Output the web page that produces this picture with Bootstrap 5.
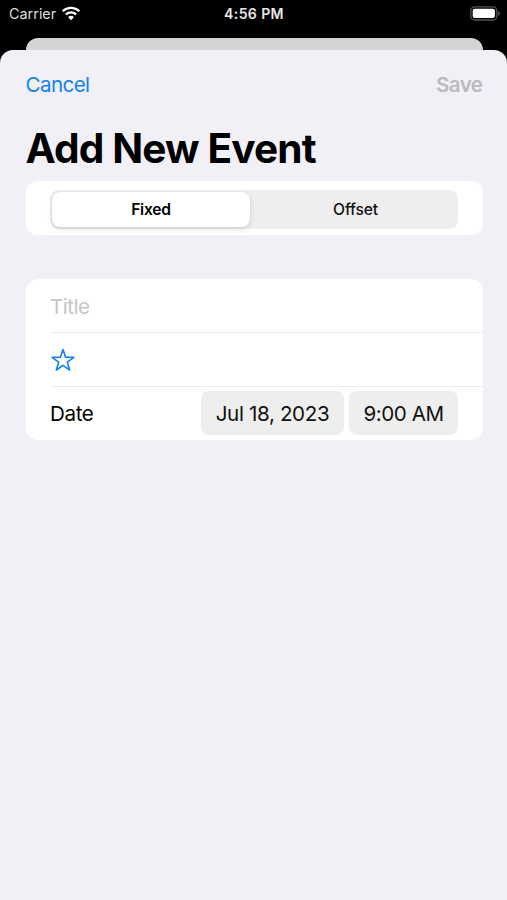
<!DOCTYPE html>
<html lang="en">
<head>
<meta charset="utf-8">
<meta name="viewport" content="width=device-width, initial-scale=1">
<title>Add New Event</title>
<link href="https://cdn.jsdelivr.net/npm/bootstrap@5.3.0/dist/css/bootstrap.min.css" rel="stylesheet">
<style>
  body { font-family: Inter, "Liberation Sans", sans-serif; font-size: 20.6px; line-height: 26px; color: #000; }
  .screen { height: 900px; }
  .status-bar { display: grid; grid-template-columns: 1fr auto 1fr; height: 38px; padding: 0 8px 10px 9px; font-size: 14.4px; line-height: 18px; color: #ddd; }
  .wifi { margin-left: 5px; margin-top: -2px; }
  .clock { font-size: 14.1px; color: #e8e8e8; letter-spacing: .36px; }
  .battery { margin-top: -2px; margin-right: -2px; }
  .sheet-behind { height: 12px; margin: 0 24.5px 0 25.5px; background: #d4d4d6; border-radius: 12px 12px 0 0; }
  .sheet { background: #f1f0f6; border-radius: 13px 13px 0 0; padding: 0 24.5px 0 25.5px; }
  .sheet-nav { height: 69px; }
  .sheet-nav .btn { font-size: 20.6px; line-height: 26px; }
  .cancel { color: #1680f5; letter-spacing: -.6px; }
  .save, .save:disabled { color: #bababf; font-weight: 600; letter-spacing: -.55px; opacity: 1; }
  .page-title { font-size: 40.6px; line-height: 50px; height: 62px; padding-top: 5px; letter-spacing: -.85px; }
  .panel { background: #fff; border-radius: 12px; }
  .mode-panel { height: 54px; padding: 9px 24.5px 6px 24.5px; margin-bottom: 44px; }
  .segments { background: #eee; border-radius: 9px; padding: 2px; height: 39px; }
  .segments .btn { font-size: 15.6px; line-height: 20px; letter-spacing: -.15px; border-radius: 8px; color: #111; font-weight: 500; }
  .segments .picked { flex: 0 0 198px; background: #fff; color: #000; font-weight: 600; letter-spacing: -.2px; box-shadow: 0 2px 5px rgba(0,0,0,.13), 0 0 1px rgba(0,0,0,.1); }
  .segments .other { padding-left: 5px !important; }
  .fields { height: 161px; padding-left: 24.5px; }
  .field { height: 54px; }
  .field:first-child { height: 53px; }
  .field + .field { border-top: 1.4px solid #ececed; }
  .field .form-control { font-size: 20.6px; line-height: 26px; letter-spacing: -.5px; padding-top: 2px !important; }
  .field .form-control::placeholder { color: #c5c5c7; opacity: 1; }
  .date-row { padding: 0 24.5px 1px 0; gap: 5px; letter-spacing: -.4px; }
  .date-label { padding-top: 2px; }
  .pill { background: #eee; border-radius: 8px; height: 44px; font-size: 20.6px; line-height: 26px; color: #111; padding-top: 2px !important; }
  .pill-date { width: 143px; letter-spacing: -.36px; }
  .pill-time { width: 109px; letter-spacing: -.45px; }
</style>
</head>
<body>
<div class="screen d-flex flex-column bg-black overflow-hidden">
  <header class="status-bar align-items-center">
    <div class="d-flex align-items-center">
      <span class="carrier">Carrier</span>
      <svg class="wifi" width="20" height="15" viewBox="0 0 20 15" fill="none" stroke="#fff" stroke-width="2.3" aria-label="Wi-Fi">
        <path d="M1.7 5.3a11.8 11.8 0 0 1 16.6 0"/>
        <path d="M4.9 8.5a7.3 7.3 0 0 1 10.2 0"/>
        <path d="M10 14.2 7.1 11.3a4.1 4.1 0 0 1 5.8 0z" fill="#fff" stroke="none"/>
      </svg>
    </div>
    <span class="clock fw-semibold">4:56 PM</span>
    <svg class="battery ms-auto" width="31" height="15" viewBox="0 0 31 15" aria-label="Battery full">
      <rect x=".8" y=".8" width="26" height="13.2" rx="3.8" fill="none" stroke="#545454" stroke-width="1.3"/>
      <rect x="2.7" y="2.7" width="22.2" height="9.4" rx="2" fill="#fff"/>
      <path d="M28.3 5.1a2.5 2.5 0 0 1 0 4.6z" fill="#666"/>
    </svg>
  </header>
  <div class="sheet-behind"></div>
  <main class="sheet flex-grow-1">
    <nav class="sheet-nav d-flex justify-content-between align-items-center">
      <button type="button" class="btn border-0 p-0 cancel">Cancel</button>
      <button type="button" class="btn border-0 p-0 save" disabled>Save</button>
    </nav>
    <h1 class="page-title fw-bold m-0">Add New Event</h1>
    <div class="panel mode-panel">
      <div class="segments d-flex">
        <button type="button" class="btn border-0 p-0 picked">Fixed</button>
        <button type="button" class="btn border-0 p-0 flex-grow-1 other">Offset</button>
      </div>
    </div>
    <form class="panel fields">
      <div class="field d-flex align-items-center">
        <input type="text" class="form-control border-0 p-0 bg-transparent" placeholder="Title" aria-label="Title">
      </div>
      <div class="field d-flex align-items-center">
        <svg width="26" height="26" viewBox="0 0 26 26" fill="none" stroke="#1680f5" stroke-width="1.6" stroke-linejoin="round" aria-label="Icon">
          <path d="M13 2.5 15.6 10.2 23.9 10.3 17.3 15.2 19.7 23 13 18.3 6.3 23 8.7 15.2 2.1 10.3 10.4 10.2Z"/>
        </svg>
      </div>
      <div class="field date-row d-flex align-items-center">
        <span class="date-label me-auto">Date</span>
        <button type="button" class="btn border-0 p-0 pill pill-date">Jul 18, 2023</button>
        <button type="button" class="btn border-0 p-0 pill pill-time">9:00 AM</button>
      </div>
    </form>
  </main>
</div>
<script src="https://cdn.jsdelivr.net/npm/bootstrap@5.3.0/dist/js/bootstrap.bundle.min.js"></script>
</body>
</html>
